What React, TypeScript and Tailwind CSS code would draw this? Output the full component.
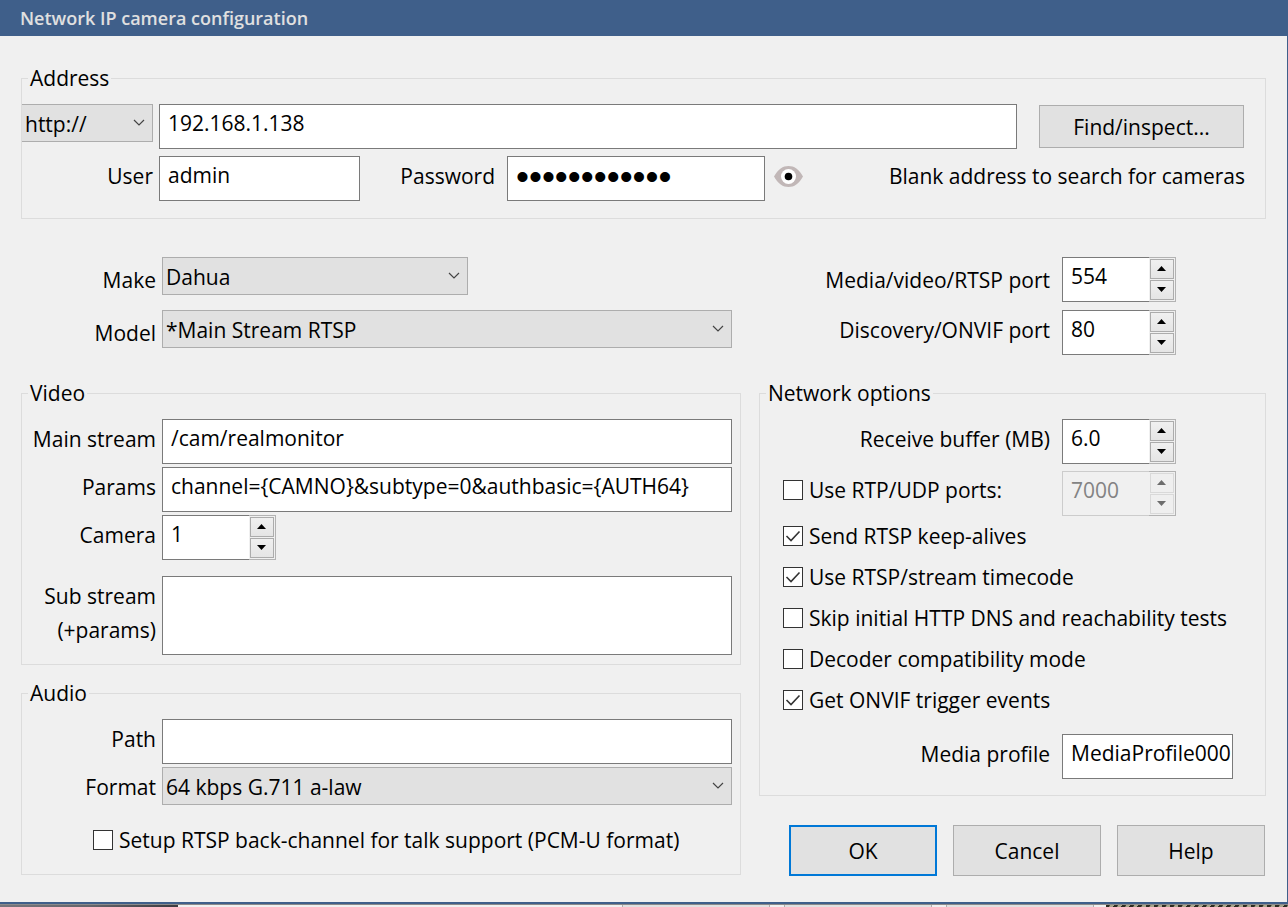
import { useId, useState } from 'react';
import type { ReactNode } from 'react';
import { clsx } from 'clsx';

const inputStyle = 'h-[45px] min-w-0 rounded-none border border-[#7a7a7a] bg-white pl-2 outline-none';

/** Titled frame, the legend cuts the top line. */
function Group({ title, className, children }: { title: string; className?: string; children: ReactNode }) {
  return (
    <fieldset className={clsx('min-w-0 border border-[#dcdcdc]', className)}>
      <legend className="ml-[6px] px-[2px] leading-7">{title}</legend>
      {children}
    </fieldset>
  );
}

/** Right-aligned caption followed by its control. */
function Field({
  label,
  id,
  wide,
  low,
  children,
}: {
  label: string;
  id: string;
  wide?: boolean;
  low?: boolean;
  children: ReactNode;
}) {
  return (
    <div className={clsx('flex items-start', wide ? 'gap-3' : 'gap-[6px]')}>
      <label
        htmlFor={id}
        className={clsx('shrink-0 text-right', wide ? 'w-[290px]' : 'w-[134px]', low ? 'pt-[9px]' : 'pt-[6px]')}
      >
        {label}
      </label>
      {children}
    </div>
  );
}

function Select({
  id,
  options,
  className,
  flush,
  ariaLabel,
}: {
  id?: string;
  options: string[];
  className?: string;
  flush?: boolean;
  ariaLabel?: string;
}) {
  return (
    <div className={clsx('relative', className)}>
      <select
        id={id}
        aria-label={ariaLabel}
        className={clsx(
          'h-[38px] w-full appearance-none rounded-none border border-[#adadad] bg-[#e1e1e1] pt-[2px] pl-[3px] outline-none',
          flush && 'border-l-0'
        )}
      >
        {options.map((o) => (
          <option key={o}>{o}</option>
        ))}
      </select>
      <svg
        className="pointer-events-none absolute right-2 top-[15px]"
        width="12"
        height="8"
        viewBox="0 0 12 8"
        fill="none"
        stroke="#444"
        strokeWidth="1.2"
      >
        <path d="M1 1 L6 6 L11 1" />
      </svg>
    </div>
  );
}

function Spinner({
  id,
  initial,
  step = 1,
  digits = 0,
  disabled,
  ariaLabel,
}: {
  id: string;
  initial: number;
  step?: number;
  digits?: number;
  disabled?: boolean;
  ariaLabel?: string;
}) {
  const [value, setValue] = useState(initial.toFixed(digits));
  const spin = (delta: number) => setValue((v) => Math.max(0, Number(v) + delta).toFixed(digits));
  const arrow = disabled ? '#6d6d6d' : '#000';
  const button = clsx(
    'flex h-5 w-6 items-center justify-center border pr-px pb-px',
    disabled ? 'border-[#d9d9d9] bg-[#efefef]' : 'border-[#acacac] bg-linear-to-b from-[#f0f0f0] to-[#e5e5e5]'
  );

  return (
    <div className="flex shrink-0">
      <input
        id={id}
        aria-label={ariaLabel}
        inputMode="decimal"
        value={value}
        disabled={disabled}
        onChange={(e) => setValue(e.target.value)}
        className={clsx(
          'h-[45px] w-[87px] rounded-none border border-r-0 pl-2 pb-2 outline-none',
          disabled ? 'border-[#cccccc] bg-[#f0f0f0] text-[#838383]' : 'border-[#7a7a7a] bg-white'
        )}
      />
      <div className="flex h-[45px] flex-col gap-px border border-l-0 border-[#b3b3b3] bg-[#f0f0f0] p-px">
        <button type="button" aria-label="Increase" disabled={disabled} className={button} onClick={() => spin(step)}>
          <svg width="9" height="5" viewBox="0 0 9 5" fill={arrow}>
            <path d="M0 5 L4.5 0 L9 5 Z" />
          </svg>
        </button>
        <button type="button" aria-label="Decrease" disabled={disabled} className={button} onClick={() => spin(-step)}>
          <svg width="9" height="5" viewBox="0 0 9 5" fill={arrow}>
            <path d="M0 0 L4.5 5 L9 0 Z" />
          </svg>
        </button>
      </div>
    </div>
  );
}

function Checkbox({ label, checked }: { label: string; checked?: boolean }) {
  const id = useId();
  return (
    <div className="flex h-7 items-center gap-[6px]">
      <span className="relative flex shrink-0">
        <input
          id={id}
          type="checkbox"
          defaultChecked={checked}
          className="peer size-5 appearance-none border border-[#333] bg-white"
        />
        <svg
          className="pointer-events-none absolute inset-0 hidden peer-checked:block"
          width="20"
          height="20"
          viewBox="0 0 20 20"
          fill="none"
          stroke="#333"
          strokeWidth="1.6"
        >
          <path d="M3.5 10 L8 14.5 L16.5 5.5" />
        </svg>
      </span>
      <label htmlFor={id} className="whitespace-nowrap">
        {label}
      </label>
    </div>
  );
}

function EyeIcon() {
  return (
    <svg width="29" height="21" viewBox="0 0 29 21">
      <path d="M0 10.5 C4 3 9 0 14.5 0 C20 0 25 3 29 10.5 C25 18 20 21 14.5 21 C9 21 4 18 0 10.5 Z" fill="#c1b7b7" />
      <circle cx="14.5" cy="10.5" r="7.5" fill="#fff" />
      <circle cx="14.5" cy="10.5" r="3.8" fill="#000" />
    </svg>
  );
}

const dialogButton = 'h-[51px] w-[148px] bg-[#e1e1e1]';

export default function App() {
  return (
    <div className="min-h-screen bg-[#f0f0f0] font-['Open_Sans','Noto_Sans',sans-serif] text-[21px] leading-7 text-black">
      <form className="border-r border-b-2 border-[#3f5f8a]" onSubmit={(e) => e.preventDefault()}>
        <header className="flex h-9 items-center bg-[#3f5f8a] pl-5">
          <h1 className="text-[18px] font-semibold text-[#e0e0e0]">Network IP camera configuration</h1>
        </header>

        <main className="px-[21px] pt-7 pb-[26px]">
          <Group title="Address" className="pb-[17px]">
            <div className="flex items-start gap-[6px] pt-3 pr-[21px]">
              <Select
                ariaLabel="Protocol"
                options={['http://', 'https://', 'rtsp://']}
                className="w-[131px] shrink-0"
                flush
              />
              <input aria-label="Address" defaultValue="192.168.1.138" className={clsx(inputStyle, 'flex-1 pb-2')} />
              <button
                type="button"
                className="mt-px ml-4 h-[43px] w-[205px] shrink-0 border border-[#adadad] bg-[#e1e1e1]"
              >
                Find/inspect...
              </button>
            </div>
            <div className="mt-[7px] flex items-start pr-5">
              <label htmlFor="user" className="w-[131px] shrink-0 pt-[6px] text-right">
                User
              </label>
              <input id="user" defaultValue="admin" className={clsx(inputStyle, 'ml-[6px] w-[201px] pb-2')} />
              <label htmlFor="password" className="w-[135px] shrink-0 pt-[6px] text-right">
                Password
              </label>
              <input
                id="password"
                type="password"
                defaultValue="camera123456"
                className={clsx(inputStyle, "ml-3 w-[258px] pb-1 font-['Liberation_Sans',sans-serif] text-[37px]")}
              />
              <button type="button" aria-label="Show password" className="mt-[10px] ml-[9px] shrink-0">
                <EyeIcon />
              </button>
              <p className="ml-auto pt-[6px] whitespace-nowrap">Blank address to search for cameras</p>
            </div>
          </Group>

          <div className="mt-[38px] grid grid-cols-[720fr_507fr] gap-x-[18px]">
            {/* Left column */}
            <div className="min-w-0">
              <div className="flex flex-col gap-[15px] pr-[9px] pl-px">
                <Field label="Make" id="make" low>
                  <Select id="make" options={['Dahua', 'Generic/ONVIF', 'Hikvision']} className="w-[306px]" />
                </Field>
                <Field label="Model" id="model" low>
                  <Select id="model" options={['*Main Stream RTSP', '*Sub Stream RTSP']} className="flex-1" />
                </Field>
              </div>

              <Group title="Video" className="mt-[31px] pr-2 pb-[9px]">
                <div className="flex flex-col gap-[3px] pt-3">
                  <Field label="Main stream" id="main-stream">
                    <input
                      id="main-stream"
                      defaultValue="/cam/realmonitor"
                      className={clsx(inputStyle, 'flex-1 pb-2')}
                    />
                  </Field>
                  <Field label="Params" id="params">
                    <input
                      id="params"
                      defaultValue="channel={CAMNO}&subtype=0&authbasic={AUTH64}"
                      className={clsx(inputStyle, 'flex-1 pb-2')}
                    />
                  </Field>
                  <Field label="Camera" id="camera">
                    <Spinner id="camera" initial={1} />
                  </Field>
                </div>
                <div className="mt-4 flex items-start gap-[6px]">
                  <label htmlFor="sub-stream" className="w-[134px] shrink-0 pt-[3px] text-right leading-[34px]">
                    Sub stream
                    <br />
                    (+params)
                  </label>
                  <textarea
                    id="sub-stream"
                    className="h-[79px] min-w-0 flex-1 resize-none border border-[#7a7a7a] bg-white px-2 py-1 outline-none"
                  />
                </div>
              </Group>

              <Group title="Audio" className="mt-[14px] pr-2 pb-5">
                <div className="flex flex-col gap-[3px] pt-3">
                  <Field label="Path" id="path">
                    <input id="path" className={clsx(inputStyle, 'flex-1 pb-2')} />
                  </Field>
                  <Field label="Format" id="format">
                    <Select id="format" options={['64 kbps G.711 a-law', '64 kbps G.711 u-law']} className="flex-1" />
                  </Field>
                </div>
                <div className="mt-[21px] pl-[71px]">
                  <Checkbox label="Setup RTSP back-channel for talk support (PCM-U format)" />
                </div>
              </Group>
            </div>

            {/* Right column */}
            <div className="min-w-0">
              <div className="flex flex-col gap-2 pl-px">
                <Field label="Media/video/RTSP port" id="rtsp-port" wide low>
                  <Spinner id="rtsp-port" initial={554} />
                </Field>
                <Field label="Discovery/ONVIF port" id="onvif-port" wide>
                  <Spinner id="onvif-port" initial={80} />
                </Field>
              </div>

              <Group title="Network options" className="mt-6 pb-4">
                <div className="flex flex-col gap-[7px] pt-3">
                  <Field label="Receive buffer (MB)" id="buffer" wide>
                    <Spinner id="buffer" initial={6} step={0.5} digits={1} />
                  </Field>
                  <div className="flex items-start gap-3">
                    <div className="w-[290px] shrink-0 pt-[5px] pl-[23px]">
                      <Checkbox label="Use RTP/UDP ports:" />
                    </div>
                    <Spinner id="udp-port" ariaLabel="RTP/UDP port" initial={7000} disabled />
                  </div>
                </div>
                <div className="mt-[6px] mb-5 flex flex-col gap-[13px] pl-[23px]">
                  <Checkbox label="Send RTSP keep-alives" checked />
                  <Checkbox label="Use RTSP/stream timecode" checked />
                  <Checkbox label="Skip initial HTTP DNS and reachability tests" />
                  <Checkbox label="Decoder compatibility mode" />
                  <Checkbox label="Get ONVIF trigger events" checked />
                </div>
                <Field label="Media profile" id="profile" wide>
                  <input id="profile" defaultValue="MediaProfile000" className={clsx(inputStyle, 'w-[171px] pb-2')} />
                </Field>
              </Group>

              <div className="mt-[29px] flex justify-end gap-4 pr-px">
                <button type="submit" className={clsx(dialogButton, 'border-2 border-[#0078d7]')}>
                  OK
                </button>
                <button type="button" className={clsx(dialogButton, 'border border-[#adadad]')}>
                  Cancel
                </button>
                <button type="button" className={clsx(dialogButton, 'border border-[#adadad]')}>
                  Help
                </button>
              </div>
            </div>
          </div>
        </main>
      </form>

      {/* Sliver of the window underneath */}
      <div className="flex h-[3px] border-t border-[#8a8a8a]">
        <div className="w-[178px] bg-linear-to-r from-[#77757c] via-[#66656b] to-[#3c3b40]" />
        <div className="flex flex-1 justify-end gap-[14px] bg-[#f0f0f0] pr-3">
          <div className="w-[148px] border-x border-[#adadad] bg-[#e1e1e1]" />
          <div className="w-[148px] border-x border-[#adadad] bg-[#e1e1e1]" />
          <div className="w-[148px] border-x border-[#adadad] bg-[#e1e1e1]" />
        </div>
        <div className="w-[182px] bg-[repeating-linear-gradient(120deg,#2e2c22_0px,#2e2c22_3px,#a9a68c_4px,#a9a68c_7px)]" />
      </div>
    </div>
  );
}
